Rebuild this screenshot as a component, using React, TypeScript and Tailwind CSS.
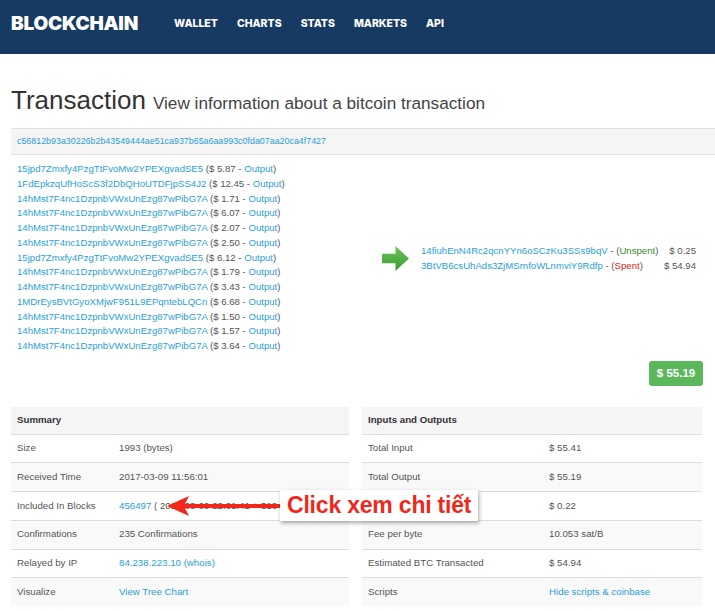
import React from 'react'

const inputs = [
  ['15jpd7Zmxfy4PzgTtFvoMw2YPEXgvadSE5', '5.87'],
  ['1FdEpkzqUfHoScS3f2DbQHoUTDFjpSS4J2', '12.45'],
  ['14hMst7F4nc1DzpnbVWxUnEzg87wPibG7A', '1.71'],
  ['14hMst7F4nc1DzpnbVWxUnEzg87wPibG7A', '6.07'],
  ['14hMst7F4nc1DzpnbVWxUnEzg87wPibG7A', '2.07'],
  ['14hMst7F4nc1DzpnbVWxUnEzg87wPibG7A', '2.50'],
  ['15jpd7Zmxfy4PzgTtFvoMw2YPEXgvadSE5', '6.12'],
  ['14hMst7F4nc1DzpnbVWxUnEzg87wPibG7A', '1.79'],
  ['14hMst7F4nc1DzpnbVWxUnEzg87wPibG7A', '3.43'],
  ['1MDrEysBVtGyoXMjwF951L9EPqntebLQCn', '6.68'],
  ['14hMst7F4nc1DzpnbVWxUnEzg87wPibG7A', '1.50'],
  ['14hMst7F4nc1DzpnbVWxUnEzg87wPibG7A', '1.57'],
  ['14hMst7F4nc1DzpnbVWxUnEzg87wPibG7A', '3.64'],
]

const link = 'text-[#2a9fd6]'

function Row({ label, children, striped, labelW }: { label: string; children: React.ReactNode; striped: boolean; labelW: string }) {
  return (
    <div className={`flex items-center h-[28.7px] border-t border-[#dddddd] whitespace-nowrap ${striped ? 'bg-[#f9f9f9]' : 'bg-white'}`}>
      <div className={`${labelW} pl-[6px] text-[#555]`}>{label}</div>
      <div className="flex-1 text-[#555]">{children}</div>
    </div>
  )
}

export default function App() {
  return (
    <div className="w-[715px] h-[611px] overflow-hidden bg-white text-[9.7px]" style={{ fontFamily: '"Liberation Sans", Arial, sans-serif' }}>
      {/* Navbar */}
      <div className="h-[54px] bg-[#173a63] flex items-start pt-[10px] pl-[11px]">
        <div className="text-white font-black text-[19px] tracking-[-0.2px]" style={{ fontFamily: 'Inter, sans-serif' }}>BLOCKCHAIN</div>
        <div className="flex gap-[19px] ml-[36px] mt-[6px] text-white text-[10.5px] font-extrabold" style={{ fontFamily: 'Inter, sans-serif' }}>
          <span>WALLET</span>
          <span>CHARTS</span>
          <span>STATS</span>
          <span>MARKETS</span>
          <span>API</span>
        </div>
      </div>

      <div className="pl-[11px]">
        {/* Title */}
        <div className="mt-[27px] flex items-baseline gap-[7px] text-[#333]">
          <span className="text-[26px]">Transaction</span>
          <span className="text-[17.2px] text-[#444]">View information about a bitcoin transaction</span>
        </div>

        {/* Hash */}
        <div className="mt-[8px] h-[27px] bg-[#f5f5f5] border-y border-[#e3e3e3] flex items-center pl-[6px] mr-[-2px]">
          <span className={`${link} text-[8.9px]`}>c56812b93a30226b2b43549444ae51ca937b65a6aa993c0fda07aa20ca4f7427</span>
        </div>

        {/* Inputs / outputs */}
        <div className="flex items-center pr-[12px]">
          <div className="w-[360px] pl-[6px] pt-[7px] leading-[14.75px] text-[9.6px]">
            {inputs.map(([a, v], i) => (
              <div key={i} className="whitespace-nowrap">
                <span className={link}>{a}</span>
                <span className="text-[#555]"> ($ {v} - </span>
                <span className={link}>Output</span>
                <span className="text-[#555]">)</span>
              </div>
            ))}
          </div>
          <div className="flex items-center flex-1 mt-[8px] pr-[7px]">
            <svg width="27" height="25" viewBox="0 0 28 26" className="ml-[11px]">
              <defs>
                <linearGradient id="g" x1="0" y1="0" x2="0" y2="1">
                  <stop offset="0" stopColor="#6cc55a" />
                  <stop offset="1" stopColor="#3d9a35" />
                </linearGradient>
              </defs>
              <path d="M0 8 H14 V0 L28 13 L14 26 V18 H0 Z" fill="url(#g)" />
            </svg>
            <div className="ml-[12px] flex-1 leading-[15px] text-[9.6px] whitespace-nowrap">
              <div className="flex justify-between">
                <span>
                  <span className={link}>14fiuhEnN4Rc2qcnYYn6oSCzKu3SSs9bqV</span>
                  <span className="text-[#555]"> - (</span>
                  <span className="text-[#3c8a2e]">Unspent</span>
                  <span className="text-[#555]">)</span>
                </span>
                <span className="text-[#555]">$ 0.25</span>
              </div>
              <div className="flex justify-between">
                <span>
                  <span className={link}>3BtVB6csUhAds3ZjMSrnfoWLnmviY9Rdfp</span>
                  <span className="text-[#555]"> - (</span>
                  <span className="text-[#e02020]">Spent</span>
                  <span className="text-[#555]">)</span>
                </span>
                <span className="text-[#555]">$ 54.94</span>
              </div>
            </div>
          </div>
        </div>

        <div className="flex justify-end pr-[12px] mt-[7px]">
          <div className="bg-[#5cb85c] text-white text-[11.5px] font-bold rounded-[3px] w-[54px] h-[25px] flex items-center justify-center">$ 55.19</div>
        </div>

        {/* Tables */}
        <div className="relative flex gap-[13px] mt-[21px] pr-[13px]">
          <div className="w-[338px]">
            <div className="h-[27px] bg-[#f5f5f5] flex items-center pl-[6px] font-bold text-[#333]">Summary</div>
            <Row label="Size" striped={false} labelW="w-[108px]">1993 (bytes)</Row>
            <Row label="Received Time" striped labelW="w-[108px]">2017-03-09 11:56:01</Row>
            <Row label="Included In Blocks" striped={false} labelW="w-[108px]">
              <span className={link}>456497</span> ( 2017-03-09 22:01:41 + 510 minutes )
            </Row>
            <Row label="Confirmations" striped labelW="w-[108px]">235 Confirmations</Row>
            <Row label="Relayed by IP" striped={false} labelW="w-[108px]">
              <span className={link}>84.238.223.10 (whois)</span>
            </Row>
            <Row label="Visualize" striped labelW="w-[108px]">
              <span className={link}>View Tree Chart</span>
            </Row>
          </div>
          <div className="flex-1">
            <div className="h-[27px] bg-[#f5f5f5] flex items-center pl-[6px] font-bold text-[#333]">Inputs and Outputs</div>
            <Row label="Total Input" striped={false} labelW="w-[187px]">$ 55.41</Row>
            <Row label="Total Output" striped labelW="w-[187px]">$ 55.19</Row>
            <Row label="Fees" striped={false} labelW="w-[187px]">$ 0.22</Row>
            <Row label="Fee per byte" striped labelW="w-[187px]">10.053 sat/B</Row>
            <Row label="Estimated BTC Transacted" striped={false} labelW="w-[187px]">$ 54.94</Row>
            <Row label="Scripts" striped labelW="w-[187px]">
              <span className={link}>Hide scripts &amp; coinbase</span>
            </Row>
          </div>

          {/* Annotation overlay */}
          <svg className="absolute left-[150px] top-[86px]" width="140" height="26" viewBox="0 0 140 26">
            <path d="M6 13 L28 3 L24 11 L140 11 L140 15 L24 15 L28 23 Z" fill="#f0281c" />
          </svg>
          <div className="absolute left-[269px] top-[83px] h-[31px] px-[7px] bg-white flex items-center shadow-[1px_2px_4px_rgba(0,0,0,0.35)]">
            <span className="text-[#f0281c] text-[23px] font-bold tracking-[-0.2px]">Click xem chi tiết</span>
          </div>
        </div>
      </div>
    </div>
  )
}
